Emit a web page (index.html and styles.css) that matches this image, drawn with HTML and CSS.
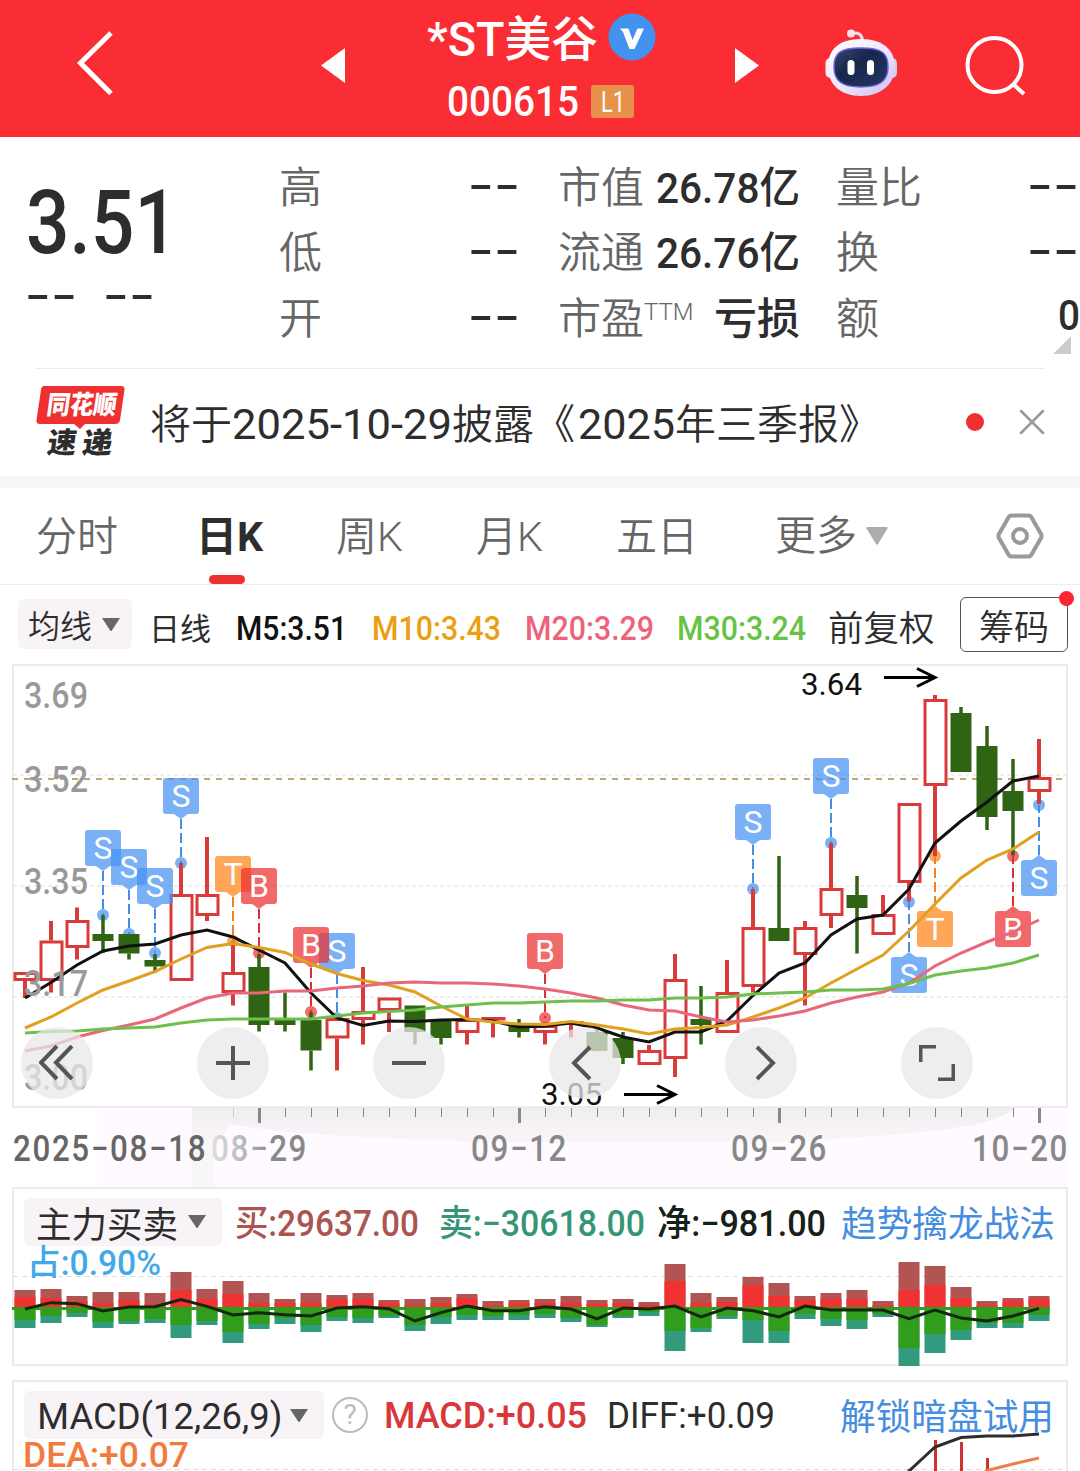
FILE: index.html
```html
<!DOCTYPE html>
<html lang="zh-CN">
<head>
  <meta charset="UTF-8">
  <meta name="viewport" content="width=device-width, initial-scale=1.0">
  <title>*ST美谷 000615</title>
  <link rel="stylesheet" href="styles.css">
</head>
<body>

  <header class="topbar">
    <svg class="back" width="40" height="68" viewBox="0 0 40 68"><path d="M36 4 L5.500 34 L36 64.500" fill="none" stroke="#fff" stroke-width="5"/></svg>
    <svg class="prev" width="24" height="35" viewBox="0 0 24 35"><path d="M24 0V35L0 17.500Z" fill="#fff"/></svg>
    <div class="stock">
      <div class="stock-name">
        <span data-w="171">*ST美谷</span>
        <svg width="48" height="48" viewBox="0 0 48 48"><circle cx="24" cy="24" r="23.500" fill="#4392ee"/><path d="M12 15.500H20.500L24.500 27 29.500 15.500H36L26.500 36H21.500L15 19Z" fill="#fff"/></svg>
      </div>
      <div class="stock-code"><span class="num" data-w="132">000615</span><span class="level"><span data-w="24">L1</span></span></div>
    </div>
    <svg class="next" width="24" height="35" viewBox="0 0 24 35"><path d="M0 0V35L24 17.500Z" fill="#fff"/></svg>
    <svg class="robot" width="74" height="70" viewBox="824 28 74 70">
      <defs>
        <linearGradient id="shell" x1="0" y1="0" x2="1" y2="1"><stop offset="0" stop-color="#fff"/><stop offset=".55" stop-color="#ece6fb"/><stop offset="1" stop-color="#c9bdf2"/></linearGradient>
        <linearGradient id="visor" x1="0" y1="0" x2="1" y2="1"><stop offset="0" stop-color="#3a4a70"/><stop offset=".4" stop-color="#18264c"/><stop offset="1" stop-color="#243763"/></linearGradient>
      </defs>
      <path d="M851 33.500Q862 31 862.500 41" fill="none" stroke="#f3dcea" stroke-width="3"/>
      <circle cx="851" cy="33.500" r="4" fill="#fbe3ea"/>
      <rect x="825.500" y="58" width="12" height="20" rx="5" fill="#f3eefc"/>
      <rect x="885" y="58" width="12" height="20" rx="5" fill="#d5ccf5"/>
      <path d="M861 39C884 39 895 51 895 67S882 96 861 96 828 84 828 67 838 39 861 39Z" fill="url(#shell)"/>
      <path d="M861 48C882 48 888 53 888 67S880 87 861 87 834 81 834 67 840 48 861 48Z" fill="url(#visor)" stroke="#6f62e0" stroke-width="1.500"/>
      <rect x="847.500" y="60" width="7" height="15" rx="3.500" fill="#fff"/>
      <rect x="867" y="60" width="7" height="15" rx="3.500" fill="#fff"/>
    </svg>
    <svg class="search" width="62" height="62" viewBox="0 0 62 62"><circle cx="29.500" cy="30" r="27" fill="none" stroke="#fff" stroke-width="4"/><path d="M48 49L59 59" stroke="#fff" stroke-width="4"/></svg>
  </header>

  <section class="quote">
    <div class="price">
      <div class="last num"><span data-w="152">3.51</span></div>
      <div class="change"><span class="dash">--</span><span class="dash">--</span></div>
    </div>
    <div class="stats">
      <div><span>高</span><span class="dash">--</span></div>
      <div><span>低</span><span class="dash">--</span></div>
      <div><span>开</span><span class="dash">--</span></div>
    </div>
    <div class="stats wide">
      <div><span>市值</span><b data-w="144">26.78亿</b></div>
      <div><span>流通</span><b data-w="144">26.76亿</b></div>
      <div><span>市盈<sup>TTM</sup></span><b>亏损</b></div>
    </div>
    <div class="stats last-col">
      <div><span>量比</span><span class="dash">--</span></div>
      <div><span>换</span><span class="dash">--</span></div>
      <div><span>额</span><b data-w="22">0</b></div>
      <i class="corner"></i>
    </div>
  </section>

  <section class="news">
    <svg width="90" height="76" viewBox="0 0 90 76">
      <path d="M8 2H85Q89 2 88.500 6L84 36Q83.500 40 79 40H49L44 45 38 40H4Q0 40 .500 36L5 6Q5.500 2 8 2Z" fill="#ee3030"/>
      <g transform="skewX(-8)" font-family="Noto Sans CJK SC" font-weight="900">
        <text x="14" y="30.500" font-size="26" fill="#fff" textLength="70" lengthAdjust="spacingAndGlyphs">同花顺</text>
        <text x="20" y="69.500" font-size="29" fill="#2d2d2d" textLength="29" lengthAdjust="spacingAndGlyphs">速</text>
        <text x="55" y="69.500" font-size="29" fill="#2d2d2d" textLength="30" lengthAdjust="spacingAndGlyphs">递</text>
      </g>
    </svg>
    <p><span>将于</span><span class="d" data-w="220">2025-10-29</span><span>披露《</span><span class="d year" data-w="97">2025</span><span>年三季报》</span></p>
    <i class="dot"></i>
    <svg class="close" width="26" height="26" viewBox="0 0 26 26"><path d="M2 2L24 24M24 2L2 24" stroke="#999" stroke-width="2.500" stroke-linecap="round"/></svg>
  </section>

  <nav class="tabs">
    <a>分时</a>
    <a class="active">日K</a>
    <a>周K</a>
    <a>月K</a>
    <a>五日</a>
    <a class="more">更多<svg width="22" height="18" viewBox="0 0 22 18"><path d="M1.500 0H20.500Q22 0 21.500 1.500L12 17Q11 18.500 10 17L.500 1.500Q0 0 1.500 0Z" fill="#adabae"/></svg></a>
    <svg class="setting" width="50" height="48" viewBox="0 0 50 48"><path d="M16.500 3.500H33.500Q35.500 3.500 36.500 5.500L46 22Q47 24 46 26L36.500 42.500Q35.500 44.500 33.500 44.500H16.500Q14.500 44.500 13.500 42.500L4 26Q3 24 4 22L13.500 5.500Q14.500 3.500 16.500 3.500Z" fill="none" stroke="#999" stroke-width="4"/><circle cx="25" cy="24" r="7" fill="none" stroke="#999" stroke-width="4"/></svg>
  </nav>

  <div class="ma-row">
    <button class="pill"><span>均线</span><svg width="18" height="13" viewBox="0 0 18 13"><path d="M0 0H18L9.500 13H8.500Z" fill="#666"/></svg></button>
    <span class="line-name">日线</span>
    <span class="num ma5" data-w="111">M5:3.51</span>
    <span class="num ma10" data-w="129">M10:3.43</span>
    <span class="num ma20" data-w="129">M20:3.29</span>
    <span class="num ma30" data-w="129">M30:3.24</span>
    <span class="adjust">前复权</span>
    <button class="chips">筹码<i></i></button>
  </div>

  <section class="kline">
    <svg id="kline" width="1080" height="527" viewBox="0 660 1080 527"></svg>
    <div class="tools">
      <button><svg width="36" height="36" viewBox="0 0 36 36"><path d="M18 1L2 17.500 18 34M33 1L17 17.500 33 34"/></svg></button>
      <button><svg width="36" height="36" viewBox="0 0 36 36"><path d="M18 1V35M1 18H35"/></svg></button>
      <button><svg width="36" height="36" viewBox="0 0 36 36"><path d="M1 18H35"/></svg></button>
      <button><svg width="36" height="36" viewBox="0 0 36 36"><path d="M23 2L7 18 23 34"/></svg></button>
      <button><svg width="36" height="36" viewBox="0 0 36 36"><path d="M14 2L30 18 14 34"/></svg></button>
      <button><svg width="36" height="36" viewBox="0 0 36 36"><path d="M1.500 17V1.500H17M19 34.500H34.500V19"/></svg></button>
    </div>
  </section>

  <section class="panel flow">
    <svg id="flow" width="1080" height="180" viewBox="0 1187 1080 180"></svg>
    <div class="panel-head">
      <button class="pill"><span data-w="142">主力买卖</span><svg width="18" height="13" viewBox="0 0 18 13"><path d="M0 0H18L9.500 13H8.500Z" fill="#666"/></svg></button>
      <span class="buy" data-w="184">买:29637.00</span>
      <span class="sell" data-w="206">卖:−30618.00</span>
      <span class="net" data-w="169">净:−981.00</span>
      <a data-w="214">趋势擒龙战法</a>
    </div>
    <div class="panel-sub ratio"><span data-w="134">占:0.90%</span></div>
  </section>

  <section class="panel macd">
    <svg id="macd" width="1080" height="91" viewBox="0 1380 1080 91"></svg>
    <div class="panel-head">
      <button class="pill"><span data-w="245">MACD(12,26,9)</span><svg width="18" height="13" viewBox="0 0 18 13"><path d="M0 0H18L9.500 13H8.500Z" fill="#666"/></svg></button>
      <span class="help">?</span>
      <span class="macd-value" data-w="203">MACD:+0.05</span>
      <span class="diff-value" data-w="168">DIFF:+0.09</span>
      <a data-w="214">解锁暗盘试用</a>
    </div>
    <div class="panel-sub dea"><span data-w="166">DEA:+0.07</span></div>
  </section>

  <script src="chart.js"></script>
</body>
</html>
```
FILE: styles.css
```css
* {
  box-sizing: border-box;
}

body {
  margin: 0;
  width: 1080px;
  height: 1471px;
  overflow: hidden;
  background: #fff;
  color: #2d2d2d;
  font-family: Roboto, "Noto Sans CJK SC", sans-serif;
}

button {
  border: 0;
  padding: 0;
  color: inherit;
  font: inherit;
}

svg {
  display: block;
  flex: none;
}

[data-w] {
  display: inline-block;
  flex: none;
  white-space: nowrap;
}

.num {
  font-weight: 500;
}

/* header */
.topbar {
  display: flex;
  align-items: flex-start;
  height: 137px;
  background: #f92d33;
  color: #fff;
}

.back { margin: 29px 0 0 75px; }
.prev { margin: 48px 0 0 206px; }

.stock {
  width: 230px;
  margin: 6px 0 0 82px;
}

.stock-name {
  display: flex;
  align-items: center;
  gap: 10px;
  height: 62px;
  font-size: 48px;
  font-weight: 500;
}

.stock-name span { margin-top: -5px; }

.stock-code {
  display: flex;
  align-items: center;
  gap: 12px;
  height: 66px;
  padding-left: 20px;
  font-size: 43px;
}

.level {
  width: 43px;
  height: 33px;
  padding-left: 10px;
  border-radius: 3px;
  background: #e8914a;
  font-size: 29px;
  line-height: 34px;
}

.next { margin: 48px 0 0 78px; }
.robot { margin: 28px 0 0 65px; }
.search { margin: 35px 0 0 67px; }

/* quote */
.quote {
  display: flex;
  height: 231px;
  padding-left: 26px;
}

.price { width: 253px; }

.last {
  height: 147px;
  padding-top: 33px;
  font-size: 89px;
  line-height: 106px;
}

.change {
  display: flex;
  gap: 28px;
  padding-left: 2px;
}

.dash {
  flex: none;
  width: 37px;
  height: 20px;
  margin: 0 16px 0 -3px;
  font-family: "DejaVu Sans", sans-serif;
  font-size: 50px;
  line-height: 20px;
  letter-spacing: .5px;
  white-space: nowrap;
  transform: scaleX(1.42);
  transform-origin: 0 50%;
}

.stats {
  width: 242px;
  padding-top: 14px;
  color: #666;
  font-size: 43px;
  font-weight: 350;
}

.stats div {
  display: flex;
  justify-content: space-between;
  align-items: center;
  height: 65.5px;
  white-space: nowrap;
}

.stats b, .stats .dash {
  color: #2d2d2d;
  font-weight: 500;
}

.stats .dash { font-weight: 400; }

.wide {
  width: 242px;
  margin-left: 37px;
}

.stats sup {
  font-size: 24px;
  font-weight: 300;
  line-height: 0;
  vertical-align: 14px;
}

.last-col {
  position: relative;
  width: 243px;
  margin-left: 37px;
}

.last-col > div > span:first-child { margin-left: -1px; }

.corner {
  position: absolute;
  right: 9px;
  bottom: 14px;
  border: 9px solid;
  border-color: transparent #ccc #ccc transparent;
}

/* news */
.news {
  display: flex;
  align-items: center;
  height: 120px;
  padding: 0 34px 0 36px;
  border-bottom: 12px solid #f6f6f6;
  background: linear-gradient(#ececec, #ececec) 36px 0 / 1008px 1px no-repeat;
}

.news > svg { overflow: visible; }

.news p {
  display: flex;
  align-items: baseline;
  flex: none;
  width: 813px;
  margin: -2px 0 0 24px;
  font-size: 41px;
  font-weight: 350;
}

.news .d {
  font-size: 42px;
  font-weight: 400;
}

.news .year { margin-left: 3px; }

.news .dot {
  flex: none;
  width: 18px;
  height: 18px;
  margin: 0 35px 0 3px;
  border-radius: 50%;
  background: #ee3030;
}

/* tabs */
.tabs {
  display: flex;
  height: 97px;
  padding-left: 36px;
  border-bottom: 1px solid #ececec;
  color: #666;
  font-size: 41px;
  font-weight: 350;
  line-height: 99px;
}

.tabs a { width: 140px; height: 96px; }
.tabs a:first-child { width: 160px; }

.tabs .active {
  position: relative;
  color: #2d2d2d;
  font-weight: 700;
}

.active::after {
  content: "";
  position: absolute;
  left: 13px;
  bottom: 0;
  width: 36px;
  height: 9px;
  border-radius: 5px;
  background: #ee3030;
}

.tabs a:nth-child(5) { width: 159px; }

.tabs .more {
  display: flex;
  align-items: center;
  gap: 9px;
  width: 220px;
}

.setting { margin-top: 24px; }

/* average line row */
.ma-row {
  display: grid;
  grid-template-columns: 131px 87px 136px 153px 152px 151px 132px 108px;
  align-items: center;
  justify-items: start;
  height: 75px;
  padding: 0 0 0 18px;
  font-size: 33px;
}

.pill {
  display: flex;
  align-items: center;
  border-radius: 6px;
  background: #f7f3f7;
}

.ma-row .pill {
  gap: 10px;
  width: 114px;
  height: 50px;
  margin-top: 3px;
  padding-left: 10px;
  font-size: 32px;
  font-weight: 350;
}

.pill span { margin-top: -1px; }

.line-name { font-size: 31px; padding-top: 7px; }
.ma-row .num { padding-top: 11px; }
.ma5 { color: #111; }
.ma10 { color: #eaa010; }
.ma20 { color: #ee6379; }
.ma30 { color: #68c244; }
.adjust { font-size: 35.5px; font-weight: 350; padding-top: 5px; }

.chips {
  position: relative;
  width: 108px;
  height: 55px;
  margin-top: 3px;
  border: 1px solid #555;
  border-radius: 6px;
  background: #fff;
  font-size: 35px;
  font-weight: 350;
  line-height: 61px;
}

.chips i {
  position: absolute;
  top: -7px;
  right: -7px;
  width: 15px;
  height: 15px;
  border-radius: 50%;
  background: #fe2533;
}

/* k line */
.kline {
  position: relative;
  height: 527px;
}

.tools {
  position: absolute;
  top: 367px;
  left: 21px;
  display: flex;
  gap: 104px;
}

.tools button {
  display: flex;
  align-items: center;
  justify-content: center;
  width: 72px;
  height: 72px;
  border-radius: 50%;
  background: rgba(232, 232, 232, .74);
}

.tools path {
  fill: none;
  stroke: #555;
  stroke-width: 4;
}

/* indicator panels */
.panel {
  display: grid;
  grid-template-rows: 59px 32px auto;
}

.panel > svg {
  grid-area: 1 / 1 / 4 / 2;
}

.flow { height: 193px; }
.macd { height: 91px; }

.panel-head {
  grid-area: 1 / 1;
  display: flex;
  align-items: center;
  height: 48px;
  margin-top: 11px;
  padding-left: 24px;
  font-size: 36px;
}

.panel-head .pill {
  gap: 10px;
  width: 198px;
  height: 48px;
  padding-left: 12px;
}

.macd .pill { width: 300px; gap: 9px; }

.flow .pill svg { margin-top: -1px; }
.macd .pill span { margin-top: 3px; }
.panel-head a { margin-top: -2px; color: #468de0; }
.flow a { margin-left: 15px; }
.macd a { margin-left: 65px; }
.buy, .sell, .net { margin-top: -4px; font-weight: 500; }
.buy { margin-left: 13px; color: #ac5450; }
.sell { margin-left: 20px; color: #369577; }
.net { margin-left: 12px; color: #142018; }

.help {
  flex: none;
  width: 36px;
  height: 36px;
  margin-left: 8px;
  border: 2.5px solid #bbb;
  border-radius: 50%;
  color: #bbb;
  font-size: 28px;
  line-height: 32px;
  text-align: center;
}

.macd-value, .diff-value { margin-top: 2px; }
.macd-value { margin-left: 16px; color: #d9383a; font-weight: 500; }
.diff-value { margin-left: 20px; }

.panel-sub {
  grid-area: 2 / 1;
  padding-left: 27px;
  font-size: 35px;
  font-weight: 500;
  line-height: 32px;
}

.ratio { padding-top: 2px; color: #42a8e8; }
.dea { padding: 1px 0 0 23px; line-height: 31px; color: #f27a40; }
```
FILE: chart.js
```js
// squeeze digits and labels to their column width
document.querySelectorAll('[data-w]').forEach(el => {
  const w = parseFloat(el.dataset.w);
  const ratio = w / el.getBoundingClientRect().width;
  el.style.width = w + 'px';
  el.style.transformOrigin = '0 50%';
  el.style.transform = `scaleX(${ratio})`;
});

const X = i => 25 + 26 * i;
const RED = '#d93a3a';
const GREEN = '#2f6512';

// [up, bodyTop, bodyBottom, high, low]
const candles = [
  [1, 972, 981, 972, 998], [1, 940.5, 981, 921, 992.5], [1, 920, 948, 907.5, 959.5],
  [0, 934, 941, 915, 953], [0, 934, 953.5, 934, 959.5], [0, 960, 966.5, 954, 972.5],
  [1, 894, 981, 863, 981], [1, 894, 916, 837, 921], [1, 972, 993, 941.5, 1005.5],
  [0, 967, 1025, 954, 1031.5], [0, 1020, 1025, 992.5, 1031.5], [0, 1020, 1050.5, 1012, 1070.5],
  [1, 1018, 1038.5, 1018, 1070.5], [1, 1011, 1020, 967, 1044.5], [1, 997.5, 1011, 997.5, 1032],
  [0, 1005.5, 1032, 1005.5, 1044.5], [0, 1021, 1038, 1021, 1044.5], [1, 1019, 1033, 1006, 1044.5],
  [1, 1017, 1020.5, 1017, 1037.5], [0, 1025, 1032, 1019, 1037.5], [1, 1025, 1033, 1022, 1044.5],
  [1, 1021, 1024.5, 1021, 1037.5], [0, 1032, 1051, 1027, 1051], [0, 1038, 1058, 1032, 1064],
  [1, 1050, 1065, 1045, 1065], [1, 979, 1059, 954, 1077], [0, 1019, 1025, 986, 1044.5],
  [1, 992, 1033, 960, 1033], [1, 927, 987, 889, 992.5], [0, 928, 941, 856, 941],
  [1, 927, 955, 921, 1005.5], [1, 888, 916, 843, 928], [0, 895, 908, 876, 953.5],
  [1, 914, 935, 895, 935], [1, 803, 883, 803, 901.5], [1, 699, 786, 695, 856],
  [0, 713, 772, 707, 772], [0, 746, 817, 726, 830], [0, 791, 811, 759, 855.5],
  [1, 777, 792, 739, 804]
];

const averages = [
  ['#111', [998, 982.5, 965, 951, 946, 944, 935, 930, 937, 950, 963, 993, 1018, 1025.5, 1021, 1021.5, 1020, 1019.5, 1021, 1027, 1026, 1023, 1028, 1037, 1042, 1032, 1032, 1021, 995.5, 973, 963, 935, 919, 915, 889, 843, 821, 802, 781, 776]],
  ['#e0a020', [1028, 1017, 1003, 990, 981, 971.5, 959, 947.5, 943.5, 947.5, 952.5, 964, 973.5, 980.5, 985, 992, 1006, 1019, 1022, 1024, 1024.5, 1021.5, 1025, 1029, 1034, 1029, 1027.5, 1025, 1017, 1008, 998, 983, 969, 955, 931, 904, 878, 860, 849, 832]],
  ['#e8677b', [1051, 1046, 1037, 1030.5, 1025, 1019, 1008, 998, 993, 993, 991, 991, 988, 986, 983, 982, 983, 983, 984, 986, 989, 993, 998, 1005, 1010, 1011, 1017, 1022, 1020, 1016, 1011, 1003, 997, 992, 983, 966, 953, 942, 932, 920]],
  ['#6fbf4d', [1033, 1031.5, 1031, 1029, 1028, 1027, 1023, 1020, 1019, 1019, 1019, 1019, 1016, 1013, 1011.5, 1010, 1007, 1005, 1003, 1003, 1002, 1001, 1001, 1000, 1000, 998, 998, 997, 994, 993, 992, 990, 990, 989, 983.5, 975, 971, 968, 963, 955]]
];

// [index, letter, boxTop, dotY]
const marks = [
  [3, 'S', 830, 915], [4, 'S', 849, 934], [5, 'S', 868, 953], [6, 'S', 778, 863],
  [8, 'T', 856, 941], [9, 'B', 868, 953], [12, 'S', 933, 1018], [11, 'B', 927, 1012],
  [20, 'B', 933, 1018], [28, 'S', 804, 889], [31, 'S', 758, 843],
  [34, 'S', 957, 902], [35, 'T', 911, 856], [38, 'B', 911, 856], [39, 'S', 860, 805]
];
const markColors = { S: ['#468de8', '#4793f3'], T: ['#f08020', '#ff8419'], B: ['#dc3030', '#ee3030'] };

function polyline(values, color, width) {
  const points = values.map((v, i) => X(i) + ',' + v).join(' ');
  return `<polyline points="${points}" fill="none" stroke="${color}" stroke-width="${width}"/>`;
}

function label(x, y, w, size, color, text, weight = 500) {
  return `<text x="${x}" y="${y}" textLength="${w}" lengthAdjust="spacingAndGlyphs" font-size="${size}" font-weight="${weight}" fill="${color}">${text}</text>`;
}

function drawKline() {
  let s = `<defs>
    <linearGradient id="shade" x1="0" x2="0" y1="0" y2="1"><stop offset="0" stop-color="#efedef"/><stop offset=".25" stop-color="#f6f2f6"/><stop offset=".5" stop-color="#f8f7f8"/></linearGradient>
    <linearGradient id="fade" x1="0" x2="1"><stop offset="0" stop-color="#e0e0e0"/><stop offset=".4" stop-color="#b0b0b0"/><stop offset=".6" stop-color="#888"/></linearGradient>
  </defs>
  <rect x="97" y="1108" width="971" height="80" fill="#fefaff"/>
  <path d="M192 1108H1015C990 1128 940 1133 780 1142H480C380 1138 280 1134 230 1124L214 1150V1187H192Z" fill="url(#shade)"/>
  <rect x="13" y="665" width="1054" height="442" fill="#fff" stroke="#ebebeb" stroke-width="2"/>`;

  [775, 886, 997].forEach(y => s += `<path d="M13 ${y}H1067" stroke="#e9e9e9" stroke-width="1.5" stroke-dasharray="4 3"/>`);
  s += '<path d="M12 779H1066" stroke="#c0a770" stroke-width="2" stroke-dasharray="6 6"/>';

  marks.forEach(([i, t, top, dot]) => {
    const below = top > dot;
    s += `<circle cx="${X(i)}" cy="${dot}" r="6" fill="${markColors[t][1]}" opacity=".72"/>`;
    s += `<path d="M${X(i)} ${below ? top - 5 : top + 41}V${dot}" stroke="${markColors[t][0]}" stroke-width="2" stroke-dasharray="10 4"/>`;
  });

  candles.forEach(([up, a, b, high, low], i) => {
    const x = X(i), c = up ? RED : GREEN;
    s += `<path d="M${x} ${high}V${a}M${x} ${b}V${low}" stroke="${c}" stroke-width="${up ? 4 : 3.5}"/>`;
    s += up
      ? `<rect x="${x - 10}" y="${a + 1.5}" width="21" height="${b - a - 3}" fill="#fff" stroke="${c}" stroke-width="3"/>`
      : `<rect x="${x - 10.5}" y="${a}" width="21" height="${b - a}" fill="${c}"/>`;
  });

  marks.forEach(([i, t, top, dot]) => {
    const x = X(i);
    const tip = top > dot ? `M${x - 7} ${top}L${x} ${top - 5} ${x + 7} ${top}Z` : `M${x - 7} ${top + 36}L${x} ${top + 41} ${x + 7} ${top + 36}Z`;
    s += `<g opacity=".72" fill="${markColors[t][1]}"><rect x="${x - 18}" y="${top}" width="36" height="36" rx="3"/><path d="${tip}"/></g>`;
    s += `<text x="${x}" y="${top + 29}" font-size="32" fill="#fff" text-anchor="middle">${t}</text>`;
  });

  averages.forEach(([c, v]) => s += polyline(v, c, 3));

  [[707.5, '3.69'], [792, '3.52'], [894, '3.35'], [996, '3.17'], [1090, '3.00']]
    .forEach(([y, t]) => s += label(24, y, 64, 36, '#999', t));

  s += label(801, 695, 61, 31, '#111', '3.64', 400) + label(541, 1104.5, 61, 31, '#111', '3.05', 400);
  s += `<path d="M884 677.500H934M917 668.500L935 677.500 917 686.500M624 1094.500H674M657 1085.500L675 1094.500 657 1103.500" fill="none" stroke="#000" stroke-width="3"/>`;

  for (let i = 8; i < 40; i++) {
    const major = i % 10 === 9;
    s += `<path d="M${X(i) + .5} 1108V${major ? 1123 : 1117}" stroke="${i === 8 ? '#ccc' : '#888'}" stroke-width="${major ? 3 : 1}"/>`;
  }
  s += dates(13, '2025−08−18', '#666') + dates(211, '08−29', 'url(#fade)') + dates(471, '09−12', '#888')
    + dates(731, '09−26', '#888') + dates(972, '10−20', '#888');
  document.getElementById('kline').innerHTML = s;
}

// narrow digits, wide gaps
function dates(x, text, color) {
  return `<text x="${x / .87}" y="1161" transform="scale(.87 1)" font-size="36" font-weight="500" fill="${color}" letter-spacing="1.9">${text}</text>`;
}

// [buyTotal, buyMain, sellMain, sellTotal] as heights from the zero line
const flows = [
  [18, 11, 12, 20], [19, 10, 8, 15], [12, 7, 5, 9], [16, 5, 14, 20], [16, 8, 13, 16], [15, 4, 11, 15],
  [36, 18, 17, 30], [19, 9, 13, 17], [27, 14, 24, 35], [15, 5, 16, 21], [9, 5, 10, 16], [15, 5, 17, 24],
  [13, 9, 9, 13], [15, 9, 10, 15], [8, 5, 8, 10], [9, 3, 17, 23], [11, 5, 9, 16], [14, 10, 7, 12],
  [7, 3, 8, 12], [8, 5, 7, 12], [9, 5, 6, 10], [12, 5, 10, 14], [8, 4, 17, 19], [9, 5, 8, 10],
  [6, 3, 4, 8], [44, 27, 23, 43], [15, 5, 20, 24], [11, 6, 8, 11], [31, 23, 12, 35], [25, 12, 23, 35],
  [12, 8, 6, 11], [15, 9, 11, 18], [18, 9, 12, 21], [7, 3, 6, 9], [46, 18, 40, 58], [42, 23, 26, 45],
  [21, 10, 22, 32], [7, 3, 15, 20], [10, 7, 15, 20], [12, 9, 7, 13]
];
const netLine = [657, 638, 641, 663, 651, 650, 629, 649, 675, 668, 674, 678, 654, 650, 656, 693, 668, 648, 662, 662, 650, 657, 687, 654, 657, 648, 681, 654, 662, 681, 648, 660, 660, 660, 686, 660, 684, 693, 678, 655];

function drawFlow() {
  const zero = 1308;
  let s = `<rect x="13" y="1188" width="1054" height="177" fill="none" stroke="#ebebeb" stroke-width="2"/>
    <path d="M13 1276.500H1066" stroke="#ddd" stroke-width="1" stroke-dasharray="5 4"/>`;
  flows.forEach(([bt, bm, sm, st], i) => {
    const x = X(i) - 10.5;
    s += `<rect x="${x}" y="${zero - bt}" width="21" height="${bt}" fill="#b25552"/>
      <rect x="${x}" y="${zero - bm}" width="21" height="${bm}" fill="#f03232"/>
      <rect x="${x}" y="${zero}" width="21" height="${st}" fill="#329a7d"/>
      <rect x="${x}" y="${zero}" width="21" height="${sm}" fill="#309d1c"/>`;
  });
  s += `<path d="M12 1308.500H1050" stroke="#309d1c" stroke-width="3"/>`;
  s += polyline(netLine.map(v => 1090 + v / 3), '#14280c', 3);
  document.getElementById('flow').innerHTML = s;
}

function drawMacd() {
  document.getElementById('macd').innerHTML = `
    <path d="M13 1471V1381H1067V1471" fill="none" stroke="#ebebeb" stroke-width="2"/>
    <path d="M13 1469.500H1066" stroke="#ddd" stroke-dasharray="5 4"/>
    <path d="M909 1469V1471M935.500 1440V1471M961.500 1442V1471M987.500 1458V1471" stroke="#cf3030" stroke-width="3"/>
    <path d="M909 1471L935 1447 961 1437.500 987 1436 1013 1436 1039 1434" fill="none" stroke="#2d2d2d" stroke-width="3"/>
    <path d="M985 1471L1013 1464 1039 1458" fill="none" stroke="#ee7f4c" stroke-width="3"/>`;
}

drawKline();
drawFlow();
drawMacd();
```
